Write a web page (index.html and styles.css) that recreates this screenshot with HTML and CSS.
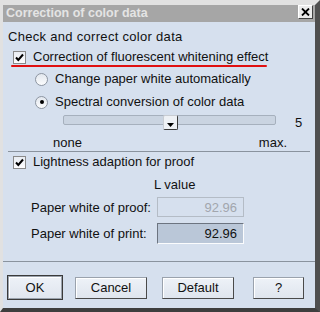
FILE: index.html
```html
<!DOCTYPE html>
<html lang="en">
<head>
  <meta charset="UTF-8" />
  <title>Correction of color data</title>
  <link rel="stylesheet" href="styles.css">
</head>
<body>
  <div class="window">
    <div class="titlebar">
      <span class="title">Correction of color data</span>
      <span class="close">
        <svg width="9" height="8" viewBox="0 0 9 8">
          <path d="M1 0.5 L8 7.5 M8 0.5 L1 7.5" stroke="#000" stroke-width="1.8" />
        </svg>
      </span>
    </div>

    <div class="content">
      <div class="row heading">Check and correct color data</div>

      <div class="row check marked">
        <span class="box">
          <svg width="11" height="11" viewBox="0 0 11 11">
            <path d="M2 5.5 L4.3 8 L9 2.5" fill="none" stroke="#000" stroke-width="2" />
          </svg>
        </span>
        Correction of fluorescent whitening effect
      </div>

      <div class="row option first">
        <span class="radio"></span>
        Change paper white automatically
      </div>
      <div class="row option second">
        <span class="radio on"></span>
        Spectral conversion of color data
      </div>

      <div class="slider-row">
        <div class="track">
          <span class="thumb">
            <svg width="7" height="4" viewBox="0 0 7 4"><path d="M0 0 H7 L3.5 4 Z" fill="#000" /></svg>
          </span>
        </div>
        <span class="slider-value">5</span>
      </div>
      <div class="scale">
        <span>none</span>
        <span>max.</span>
      </div>

      <div class="sep"></div>

      <div class="row check">
        <span class="box">
          <svg width="11" height="11" viewBox="0 0 11 11">
            <path d="M2 5.5 L4.3 8 L9 2.5" fill="none" stroke="#000" stroke-width="2" />
          </svg>
        </span>
        Lightness adaption for proof
      </div>

      <div class="row lvalue">L value</div>

      <div class="field-row proof">
        <span class="field-label">Paper white of proof:</span>
        <span class="field disabled">92.96</span>
      </div>
      <div class="field-row print">
        <span class="field-label">Paper white of print:</span>
        <span class="field">92.96</span>
      </div>
    </div>

    <div class="sep full"></div>

    <div class="buttons">
      <button class="btn ok">OK</button>
      <button class="btn cancel">Cancel</button>
      <button class="btn default">Default</button>
      <button class="btn help">?</button>
    </div>
  </div>
</body>
</html>
```

FILE: styles.css
```css
body {
  margin: 0;
  font-family: "Liberation Sans", Arial, sans-serif;
  font-size: 13px;
  color: #111;
}

.window {
  width: 320px;
  height: 312px;
  box-sizing: border-box;
  border-top: 5px solid #e1e1e1;
  border-left: 3px solid #e1e1e1;
  border-right: 5px solid #4f4f4f;
  border-bottom: 4px solid #3e3e3e;
  background: #d6e0ee;
}

.titlebar {
  height: 17px;
  background: #a6a6a6;
  display: flex;
  justify-content: space-between;
  align-items: flex-start;
  padding: 0 2px 0 3px;
}

.title {
  font-size: 12.5px;
  font-weight: bold;
  line-height: 17px;
  color: #e4e4e4;
}

.close {
  width: 15px;
  height: 14px;
  box-sizing: border-box;
  background: #ebebeb;
  border: 1px solid;
  border-color: #fff #404040 #404040 #fff;
  display: flex;
  align-items: center;
  justify-content: center;
}

.row {
  height: 20px;
  line-height: 20px;
  display: flex;
  align-items: center;
}

.heading {
  margin-top: 5px;
  padding-left: 5px;
  letter-spacing: 0.3px;
}

.check {
  padding-left: 10px;
}

.marked {
  position: relative;
}

/* red pen mark under the first option */
.marked::after {
  content: "";
  position: absolute;
  left: 8px;
  width: 256px;
  bottom: 0;
  height: 2px;
  border-radius: 1px;
  background: #e01010;
}

.box {
  width: 13px;
  height: 13px;
  box-sizing: border-box;
  margin-right: 7px;
  border: 1px solid #8a8a8a;
  background: linear-gradient(#e9edf3, #fdfdfe);
  display: flex;
  align-items: center;
  justify-content: center;
}

.option {
  padding-left: 32px;
}

.first {
  margin-top: 2px;
}

.second {
  margin-top: 3px;
}

.radio {
  width: 13px;
  height: 13px;
  box-sizing: border-box;
  margin-right: 7px;
  border: 1px solid #8d95a1;
  border-radius: 50%;
  background: linear-gradient(#e2e7ee, #fbfcfd);
  display: flex;
  align-items: center;
  justify-content: center;
}

.radio.on::before {
  content: "";
  width: 4px;
  height: 4px;
  border-radius: 50%;
  background: #000;
}

.slider-row {
  margin-top: 3px;
  height: 15px;
  display: flex;
  align-items: flex-start;
  padding-left: 60px;
}

.track {
  position: relative;
  width: 213px;
  height: 10px;
  box-sizing: border-box;
  border: 1px solid #a6b0bd;
  border-radius: 2px;
  background: #cad4e1;
}

.thumb {
  position: absolute;
  left: 99px;
  top: -1px;
  width: 15px;
  height: 15px;
  box-sizing: border-box;
  border: 1px solid;
  border-color: #c8ccd2 #3a3a3a #3a3a3a #c8ccd2;
  border-radius: 2px;
  background: #eef1f5;
  display: flex;
  justify-content: center;
  align-items: flex-end;
  padding-bottom: 2px;
}

.slider-value {
  margin-left: 19px;
  line-height: 15px;
}

.scale {
  margin-top: 5px;
  height: 16px;
  line-height: 16px;
  display: flex;
  justify-content: space-between;
  padding: 0 28px 0 50px;
}

.sep {
  height: 1px;
  margin: 0 5px;
  background: #8a939e;
}

.sep.full {
  margin: 16px 0 0;
}

.lvalue {
  margin-top: 3px;
  padding-left: 151px;
}

.field-row {
  display: flex;
  align-items: center;
  padding-left: 28px;
}

.proof {
  margin-top: 1px;
  height: 22px;
}

.print {
  margin-top: 4px;
  height: 23px;
}

.field-label {
  width: 126px;
}

.field {
  width: 87px;
  height: 20px;
  box-sizing: border-box;
  padding-right: 6px;
  text-align: right;
  line-height: 19px;
  border: 1px solid;
  border-color: #6c7480 #fbfcfd #fbfcfd #6c7480;
  background: #bac7d8;
}

.print .field {
  height: 21px;
}

.field.disabled {
  color: #a2a6ad;
  border-color: #b4bcc6;
  background: #d6e0ee;
}

.buttons {
  margin-top: 12px;
  height: 27px;
  display: flex;
  align-items: center;
  padding-left: 4px;
}

.btn {
  height: 22px;
  padding: 0;
  font-family: inherit;
  font-size: 13px;
  color: #111;
  border: 1px solid;
  border-color: #9aa2ad #4a4a4a #4a4a4a #9aa2ad;
  box-shadow: inset 1px 1px 0 #fff;
  background: linear-gradient(#eef2f8, #dfe5ee);
}

.ok {
  width: 56px;
  height: 25px;
  border-color: #3a3a3a;
  box-shadow: inset 0 0 0 1px #9aa2ad, inset 2px 2px 0 #fff;
}

.cancel {
  width: 72px;
  margin-left: 12px;
}

.default {
  width: 72px;
  margin-left: 15px;
}

.help {
  width: 51px;
  margin-left: 19px;
}
```
